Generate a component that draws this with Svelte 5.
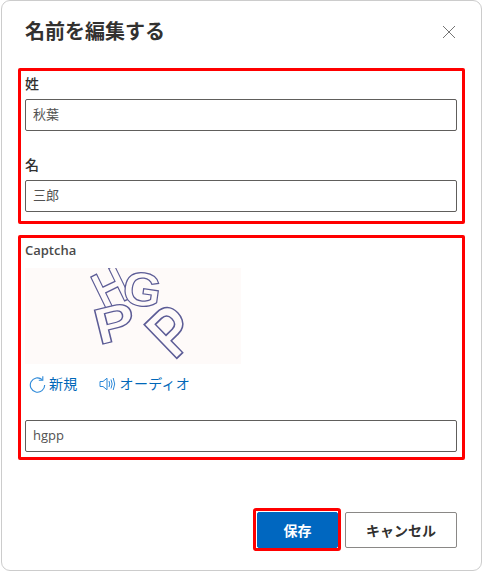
<script lang="ts">
    let lastName: string = "秋葉";
    let firstName: string = "三郎";
    let captcha: string = "hgpp";

    // captcha picture letters: x, y, rotation, x scale, y scale
    const captchaLetters = [
        { ch: "H", x: 79, y: 43, r: -26, sx: 1.02, sy: 1.2 },
        { ch: "G", x: 96, y: 35, r: 8, sx: 1.12, sy: 1.08 },
        { ch: "P", x: 74, y: 77, r: -14, sx: 1.4, sy: 1.15 },
        { ch: "P", x: 149, y: 93, r: -44, sx: 1.3, sy: 1.55 },
    ];
</script>

<div class="dialog">
    <header class="head">
        <h1>名前を編集する</h1>
        <button class="close" aria-label="閉じる">
            <svg width="14" height="14" viewBox="0 0 14 14">
                <path d="M1 1 L13 13 M13 1 L1 13" stroke="#757575" stroke-width="1" fill="none" />
            </svg>
        </button>
    </header>

    <section class="mark names">
        <label for="last">姓</label>
        <input id="last" bind:value={lastName} />
        <label for="first" class="second">名</label>
        <input id="first" bind:value={firstName} />
    </section>

    <section class="mark cap">
        <label for="cap" class="latin">Captcha</label>
        <div class="picture">
            <svg width="216" height="96" viewBox="0 0 216 96">
                {#each captchaLetters as l}
                    <text
                        class="cap-letter"
                        transform="translate({l.x} {l.y}) rotate({l.r}) scale({l.sx} {l.sy})"
                    >{l.ch}</text>
                {/each}
            </svg>
        </div>
        <div class="links">
            <a href="#new" class="link">
                <svg width="17" height="18" viewBox="0 0 17 18">
                    <path d="M13.2 4.6 A7.2 7.2 0 1 0 15.7 10" stroke="#2b88d8" stroke-width="1.1" fill="none" />
                    <path d="M13.8 1.2 V5.2 H9.8" stroke="#2b88d8" stroke-width="1.1" fill="none" />
                </svg>
                新規
            </a>
            <a href="#audio" class="link">
                <svg width="18" height="16" viewBox="0 0 18 16">
                    <path d="M1 5.5 H4 L8 2.2 V13.8 L4 10.5 H1 Z" stroke="#2b88d8" stroke-width="1" fill="none" />
                    <path d="M10 5 Q11.5 8 10 11 M12 3.5 Q14.3 8 12 12.5 M14.2 2 Q17.2 8 14.2 14" stroke="#2b88d8" stroke-width="1" fill="none" />
                </svg>
                オーディオ
            </a>
        </div>
        <input id="cap" bind:value={captcha} />
    </section>

    <footer class="foot">
        <div class="save-mark"><button class="save">保存</button></div>
        <button class="cancel">キャンセル</button>
    </footer>
</div>

<style>
    :global(body) {
        margin: 0;
        background: #ffffff;
        font-family: "Liberation Sans", "Noto Sans CJK JP", sans-serif;
    }

    .dialog {
        box-sizing: border-box;
        width: 481px;
        height: 571px;
        margin-left: 1px;
        background: #fff;
        border: 1px solid #cccccc;
        border-radius: 9px;
        padding: 0 23px 0 16px;
        color: #323130;
    }

    .head {
        display: flex;
        justify-content: space-between;
        align-items: center;
        height: 67px;
        padding-left: 7px;
        padding-right: 2px;
    }

    h1 {
        margin: 0;
        font-size: 20px;
        font-weight: 700;
        line-height: 26px;
        color: #323130;
        margin-bottom: 6px;
    }

    .close {
        border: 0;
        background: none;
        padding: 0;
        width: 14px;
        height: 14px;
        margin-bottom: 6px;
    }

    .mark {
        box-sizing: border-box;
        width: 447px;
        border: 3px solid #ff0000;
        border-radius: 2px;
        padding: 0 5px 0 4px;
    }

    .names {
        height: 156px;
        padding-top: 3px;
    }

    .cap {
        height: 225px;
        margin-top: 11px;
        padding-top: 2px;
    }

    label {
        display: block;
        font-size: 14px;
        font-weight: 500;
        line-height: 20px;
        height: 20px;
        margin-bottom: 5px;
        color: #323130;
    }

    label.second {
        margin-top: 24px;
    }

    label.latin {
        font-family: "Open Sans", "Noto Sans", sans-serif;
        font-size: 13px;
        font-weight: 600;
        color: #4a4a4a;
        margin-bottom: 8px;
    }

    input {
        box-sizing: border-box;
        display: block;
        width: 432px;
        height: 32px;
        border: 1px solid #605e5c;
        border-radius: 2px;
        padding: 0 7px 3px;
        font-family: "Open Sans", "Noto Sans CJK JP", sans-serif;
        font-size: 13px;
        color: #525252;
        background: #fff;
        outline: none;
    }

    .picture {
        width: 216px;
        height: 96px;
        background: #fefaf9;
    }

    .picture svg {
        display: block;
    }

    .cap-letter {
        font-family: "Liberation Sans", sans-serif;
        font-size: 44px;
        font-weight: 700;
        fill: #fefaf9;
        stroke: #5c5c96;
        stroke-width: 1.1px;
    }

    .links {
        display: flex;
        gap: 21px;
        height: 56px;
        padding: 11px 0 0 4px;
        box-sizing: border-box;
    }

    .link {
        display: flex;
        align-items: center;
        gap: 3px;
        height: 18px;
        font-size: 14px;
        line-height: 18px;
        letter-spacing: 0.3px;
        color: #0067b8;
        text-decoration: none;
    }

    .foot {
        display: flex;
        justify-content: flex-end;
        align-items: flex-start;
        margin-top: 48px;
        gap: 4px;
        width: 439px;
    }

    .save-mark {
        box-sizing: border-box;
        width: 88px;
        height: 43px;
        border: 3px solid #ff0000;
        border-radius: 3px;
        padding: 1px 0 0 1px;
    }

    button.save, button.cancel {
        box-sizing: border-box;
        display: block;
        font-family: "Liberation Sans", "Noto Sans CJK JP", sans-serif;
        font-size: 14px;
        font-weight: 700;
        height: 36px;
        border-radius: 2px;
    }

    button.save {
        width: 81px;
        background: #0067c0;
        color: #fff;
        border: 1px solid #0067c0;
    }

    button.cancel {
        width: 112px;
        margin-top: 4px;
        background: #fff;
        color: #323130;
        border: 1px solid #8a8886;
    }
</style>
